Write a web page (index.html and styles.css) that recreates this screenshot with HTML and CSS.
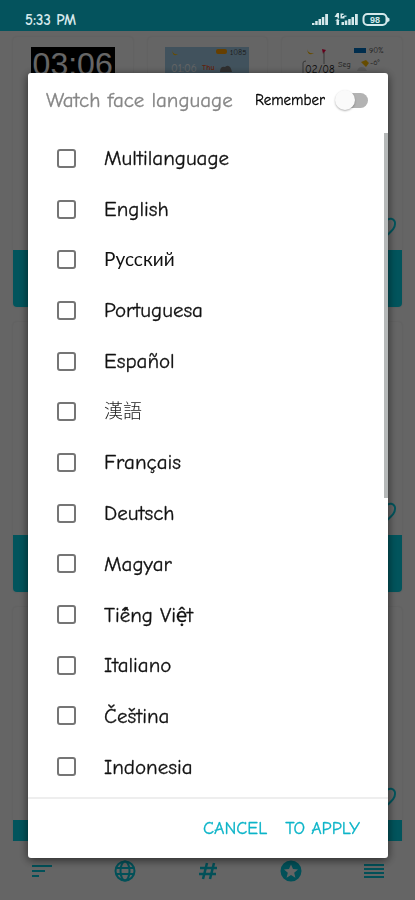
FILE: index.html
```html
<!DOCTYPE html>
<html lang="en">
<head>
<meta charset="utf-8">
<meta name="viewport" content="width=device-width, initial-scale=1">
<title>Watch faces</title>
<link rel="stylesheet" href="styles.css">
</head>
<body>
<div class="app">
  <header class="status">
    <span>5:33 PM</span>
    <svg class="status-icons" width="80" height="16" viewBox="0 0 80 16" aria-hidden="true">
      <g fill="currentColor">
        <path d="M0 11h2.500v2H0zM3.200 9h2.500v4H3.200zM6.500 7h2.500v6H6.500zM9.800 5h2.500v8H9.800zM13.200 2h2.800v11h-2.800z"/>
        <path d="M29.500 10h2.500v3h-2.500zM32.800 8.500h2.500V13h-2.500zM36.200 7h2.500v6h-2.500zM39.500 5h2.500v8h-2.500zM43 2h2.800v11H43z"/>
        <path d="M25 1l-2.500 4h3v1.500H27V1zM28.500 1.500h3V3H30v2h.5V4h2v2.500h-4zM23 8.500L25.500 7 28 8.500zM24.500 8.500H27V13h-2.500zM32 3.500h2.500v1.200H32z"/>
      </g>
      <rect x="51.500" y="2" width="23" height="11" rx="4" fill="none" stroke="currentColor" stroke-width="2"/>
      <path d="M75 5l2.500 1.500v2.500L75 10.500z" fill="currentColor"/>
      <text class="battery" x="63" y="11" text-anchor="middle">98</text>
    </svg>
  </header>

  <main class="faces">
    <article class="card">
      <div class="preview digital">03:06</div>
      <svg class="heart" viewBox="0 0 24 24"><path d="M12 20C5 14 3 11.500 3 8a4.500 4.500 0 0 1 9-1.500A4.500 4.500 0 0 1 21 8c0 3.500-2 6-9 12z"/></svg>
      <div class="band"></div>
    </article>
    <article class="card">
      <svg class="preview sky" viewBox="0 0 84 84">
        <path d="M7 3q1 5 6 4-5 4-6-4z" fill="#ffbd00"/><rect x="51" y="2" width="11" height="5" rx="2" fill="#ff9d00"/>
        <text x="65" y="8" class="tiny">1085</text><text x="6" y="25" class="clock">01:06</text>
        <text x="37" y="23" class="day">Thu</text><path d="M55 25q0-6 5-5 5-4 7 5z" fill="#777"/>
      </svg>
      <svg class="heart" viewBox="0 0 24 24"><path d="M12 20C5 14 3 11.500 3 8a4.500 4.500 0 0 1 9-1.500A4.500 4.500 0 0 1 21 8c0 3.500-2 6-9 12z"/></svg>
      <div class="band"></div>
    </article>
    <article class="card">
      <svg class="preview" viewBox="0 0 84 84">
        <path d="M7 2q1 5 7 4-6 4-7-4zM61 15l5-2 3 3-3 4z" fill="#ffbd00"/><path d="M22 2l4 1-3 4z" fill="#f04"/>
        <path d="M24 5v12M3 27V16q0-2 3-2" fill="none" stroke="#888"/><rect x="54" y="1" width="12" height="5" fill="#0070c0"/>
        <text x="69" y="6" class="tiny">90%</text><text x="5" y="26" class="date">02/08</text><text x="38" y="20" class="tiny">Seg</text><text x="70" y="18" class="tiny">-6°</text>
        <path d="M57 24q2-6 8-3l2 3z" fill="#ddd"/>
      </svg>
      <svg class="heart" viewBox="0 0 24 24"><path d="M12 20C5 14 3 11.500 3 8a4.500 4.500 0 0 1 9-1.500A4.500 4.500 0 0 1 21 8c0 3.500-2 6-9 12z"/></svg>
      <div class="band"></div>
    </article>
    <article class="card"><div class="band"></div></article>
    <article class="card"><div class="band"></div></article>
    <article class="card">
      <svg class="heart" viewBox="0 0 24 24"><path d="M12 20C5 14 3 11.500 3 8a4.500 4.500 0 0 1 9-1.500A4.500 4.500 0 0 1 21 8c0 3.500-2 6-9 12z"/></svg>
      <div class="band"></div>
    </article>
    <article class="card"><div class="band"></div></article>
    <article class="card"><div class="band"></div></article>
    <article class="card">
      <svg class="heart" viewBox="0 0 24 24"><path d="M12 20C5 14 3 11.500 3 8a4.500 4.500 0 0 1 9-1.500A4.500 4.500 0 0 1 21 8c0 3.500-2 6-9 12z"/></svg>
      <div class="band"></div>
    </article>
  </main>

  <nav class="tabs">
    <a href="#sort" aria-label="Sort"><svg viewBox="0 0 24 24"><path d="M2 7h20M2 12h13M2 17h7" fill="none" stroke="currentColor" stroke-width="2"/></svg></a>
    <a href="#language" aria-label="Language"><svg viewBox="0 0 24 24"><g fill="none" stroke="currentColor" stroke-width="2"><circle cx="12" cy="12" r="9.500"/><ellipse cx="12" cy="12" rx="4.500" ry="9.500"/><path d="M3 9h18M3 15h18"/></g></svg></a>
    <a href="#tags" aria-label="Tags"><svg viewBox="0 0 24 24"><path d="M11 4L7 20M18 4l-4 16M4 9h17M3 15h17" fill="none" stroke="currentColor" stroke-width="2.500"/></svg></a>
    <a href="#favorites" aria-label="Favorites"><svg viewBox="0 0 24 24"><path fill-rule="evenodd" fill="currentColor" d="M12 1.500a10.500 10.500 0 1 0 0 21 10.500 10.500 0 0 0 0-21zM12 5.500l2 4.600 5 .4-3.800 3.300 1.200 4.900-4.400-2.600-4.400 2.600 1.200-4.900L5 10.500l5-.4z"/></svg></a>
    <a href="#menu" aria-label="Menu"><svg viewBox="0 0 24 24"><path d="M2 6h20M2 10h20M2 14h20M2 18h20" fill="none" stroke="currentColor" stroke-width="2"/></svg></a>
  </nav>
</div>

<div class="scrim">
  <form class="dialog" role="dialog" aria-labelledby="title">
    <div class="head">
      <h1 id="title">Watch face language</h1>
      <label class="remember">Remember <input type="checkbox" class="switch"></label>
    </div>
    <div class="list">
      <label><input type="checkbox">Multilanguage</label>
      <label><input type="checkbox">English</label>
      <label lang="ru"><input type="checkbox">Русский</label>
      <label><input type="checkbox">Portuguesa</label>
      <label lang="es"><input type="checkbox">Español</label>
      <label lang="zh"><input type="checkbox">漢語</label>
      <label lang="fr"><input type="checkbox">Français</label>
      <label lang="de"><input type="checkbox">Deutsch</label>
      <label lang="hu"><input type="checkbox">Magyar</label>
      <label lang="vi"><input type="checkbox">Tiếng Việt</label>
      <label lang="it"><input type="checkbox">Italiano</label>
      <label lang="cs"><input type="checkbox">Čeština</label>
      <label lang="id"><input type="checkbox">Indonesia</label>
      <div class="thumb"></div>
    </div>
    <div class="actions">
      <button type="button">CANCEL</button>
      <button type="button">TO APPLY</button>
    </div>
  </form>
</div>
</body>
</html>
```
FILE: styles.css
```css
* { box-sizing: border-box; }

body {
  margin: 0;
  font-family: "Comic Sans MS", "Comic Neue", Lato, "Noto Sans", "Noto Sans CJK TC", sans-serif;
  color: #111;
}

.app {
  height: 100vh;
  display: flex;
  flex-direction: column;
  overflow: hidden;
  background: #fcfcfc;
}

.status {
  flex: none;
  height: 31px;
  padding: 8px 24px 0 25px;
  display: flex;
  justify-content: space-between;
  align-items: center;
  background: #04535d;
  color: #d5e8eb;
  font-size: 15px;
  font-weight: 700;
  line-height: 16px;
  position: relative;
  z-index: 3;
}

.status-icons { margin-right: -1px; }
.battery { font: 700 9px "Liberation Sans", sans-serif; fill: currentColor; }

.faces {
  flex: 1;
  min-height: 0;
  overflow: hidden;
  padding: 6px 13px 0;
  display: grid;
  grid-template-columns: repeat(3, 1fr);
  grid-auto-rows: 270px;
  gap: 15px;
}

.card {
  display: flex;
  flex-direction: column;
  align-items: flex-end;
  border-radius: 4px;
  overflow: hidden;
  box-shadow: 0 0 2px #ddd;
}

.preview { width: 84px; height: 84px; margin: 10px 18px 0; }
.digital {
  background: #000;
  color: #fff;
  font: 32px/34px "Liberation Sans Narrow", "Liberation Sans", sans-serif;
  text-align: center;
}
.sky { background: #a4cee8; }
.tiny { font-size: 8px; fill: #444; }
.clock { font-size: 11px; fill: #fff; }
.day { font-size: 8px; font-weight: 700; fill: #e52; }
.date { font-size: 11px; fill: #111; }

.heart {
  width: 24px;
  height: 24px;
  margin: auto 4px 10px;
  flex: none;
  fill: none;
  stroke: #05d2e6;
  stroke-width: 2;
}

.band { width: 100%; height: 57px; flex: none; margin-top: auto; background: #05d2e6; }
.heart + .band { margin-top: 0; }

.tabs {
  flex: none;
  height: 59px;
  display: flex;
  background: #fcfcfc;
}
.tabs a { flex: 1; display: flex; justify-content: center; align-items: center; color: #05c8dc; }
.tabs svg { width: 24px; height: 24px; }

.scrim {
  position: fixed;
  inset: 0;
  z-index: 2;
  display: flex;
  padding: 73px 27px 42px 28px;
  background: rgba(0, 0, 0, .6);
}

.dialog {
  flex: 1;
  display: flex;
  flex-direction: column;
  background: #fff;
  border-radius: 3px;
  box-shadow: 0 2px 10px rgba(0, 0, 0, .6);
  -webkit-text-stroke: .3px;
}

.head {
  height: 60px;
  padding: 0 20px 6px 18px;
  display: flex;
  justify-content: space-between;
  align-items: center;
}
.head h1 { margin: 0; font-size: 21px; font-weight: 400; color: #868686; white-space: nowrap; }

.remember { display: flex; align-items: center; gap: 10px; font-size: 15px; color: #000; }

.switch {
  appearance: none;
  width: 33px;
  height: 22px;
  margin: 0;
  display: flex;
  align-items: center;
  position: relative;
}
.switch::before {
  content: "";
  width: 28px;
  height: 15px;
  margin-left: auto;
  border-radius: 8px;
  background: #b3b3b3;
}
.switch::after {
  content: "";
  position: absolute;
  left: 0;
  width: 20px;
  height: 20px;
  border-radius: 50%;
  background: #fafafa;
  box-shadow: 0 1px 2px rgba(0, 0, 0, .3);
}

.list {
  flex: 1;
  min-height: 0;
  padding-bottom: 5px;
  display: flex;
  flex-direction: column;
  position: relative;
}
.list label {
  flex: 1;
  padding-left: 29px;
  display: flex;
  align-items: center;
  gap: 28px;
  font-size: 21px;
  line-height: 24px;
}
.list label:lang(ru), .list label:lang(zh) { font-size: 19px; -webkit-text-stroke: 0; }
.list label:lang(zh) { font-weight: 300; color: #222; }
.list input {
  appearance: none;
  width: 19px;
  height: 19px;
  margin: 0;
  border: 2px solid #757575;
  border-radius: 3px;
}
.thumb { position: absolute; top: 0; right: 0; width: 4px; height: 55%; background: #b5b8b8; }

.actions {
  height: 61px;
  padding: 0 20px;
  border-top: 2px solid #eee;
  display: flex;
  justify-content: flex-end;
  align-items: center;
  gap: 2px;
}
.actions button {
  padding: 8px;
  border: 0;
  background: none;
  color: #0cb4c8;
  font: inherit;
  font-size: 18px;
  -webkit-text-stroke: .3px;
}
```
